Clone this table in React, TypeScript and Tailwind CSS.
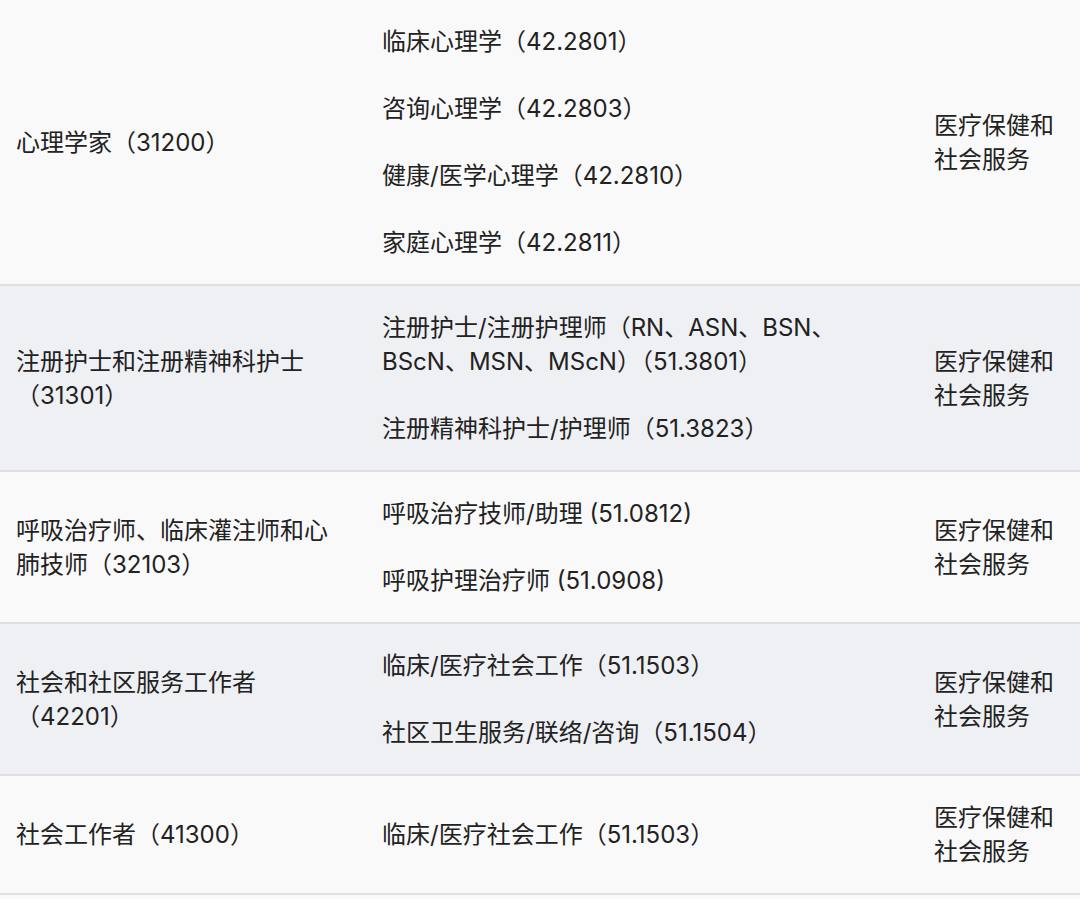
import React from "react";

type Row = {
  occ: string[];
  programs: string[][];
  sector: string[];
};

const rows: Row[] = [
  {
    occ: ["心理学家（31200）"],
    programs: [
      ["临床心理学（42.2801）"],
      ["咨询心理学（42.2803）"],
      ["健康/医学心理学（42.2810）"],
      ["家庭心理学（42.2811）"],
    ],
    sector: ["医疗保健和", "社会服务"],
  },
  {
    occ: ["注册护士和注册精神科护士", "（31301）"],
    programs: [
      ["注册护士/注册护理师（RN、ASN、BSN、", "BScN、MSN、MScN）（51.3801）"],
      ["注册精神科护士/护理师（51.3823）"],
    ],
    sector: ["医疗保健和", "社会服务"],
  },
  {
    occ: ["呼吸治疗师、临床灌注师和心", "肺技师（32103）"],
    programs: [["呼吸治疗技师/助理 (51.0812)"], ["呼吸护理治疗师 (51.0908)"]],
    sector: ["医疗保健和", "社会服务"],
  },
  {
    occ: ["社会和社区服务工作者", "（42201）"],
    programs: [["临床/医疗社会工作（51.1503）"], ["社区卫生服务/联络/咨询（51.1504）"]],
    sector: ["医疗保健和", "社会服务"],
  },
  {
    occ: ["社会工作者（41300）"],
    programs: [["临床/医疗社会工作（51.1503）"]],
    sector: ["医疗保健和", "社会服务"],
  },
];

function Lines({ lines }: { lines: string[] }) {
  return (
    <div className="whitespace-nowrap">
      {lines.map((l, i) => (
        <div key={i}>{l}</div>
      ))}
    </div>
  );
}

export default function App() {
  return (
    <div
      className="w-[1080px] min-h-[899px] bg-[#f9f9f9] text-[#222222] text-[24px] leading-[34px]"
      style={{ fontFamily: '"Inter", "Noto Sans CJK SC", sans-serif' }}
    >
      {rows.map((r, i) => (
        <div
          key={i}
          className={`grid grid-cols-[366px_552px_1fr] border-b-[2px] border-[#dfdfe1] ${
            i % 2 === 1 ? "bg-[#eff0f4]" : "bg-[#f9f9f9]"
          }`}
        >
          <div className="flex items-center px-4 pt-[25px] pb-[24px]">
            <Lines lines={r.occ} />
          </div>
          <div className="flex flex-col justify-center gap-[33px] px-4 pt-[25px] pb-[24px]">
            {r.programs.map((p, j) => (
              <Lines key={j} lines={p} />
            ))}
          </div>
          <div className="flex items-center px-4 pt-[25px] pb-[24px]">
            <Lines lines={r.sector} />
          </div>
        </div>
      ))}
    </div>
  );
}
